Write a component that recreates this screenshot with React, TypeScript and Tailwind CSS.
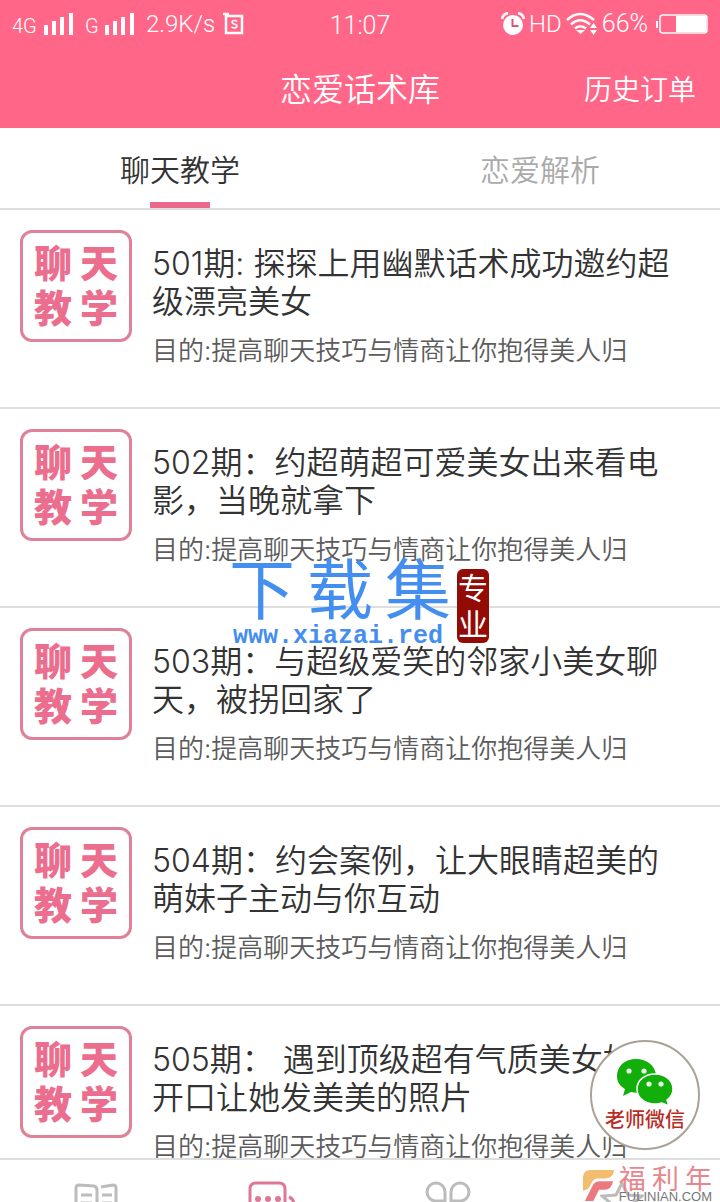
interface Lesson {
    id: number;
    title: string;
}

const lessons: Lesson[] = [
    { id: 501, title: '501期: 探探上用幽默话术成功邀约超级漂亮美女' },
    { id: 502, title: '502期：约超萌超可爱美女出来看电影，当晚就拿下' },
    { id: 503, title: '503期：与超级爱笑的邻家小美女聊天，被拐回家了' },
    { id: 504, title: '504期：约会案例，让大眼睛超美的萌妹子主动与你互动' },
    { id: 505, title: '505期： 遇到顶级超有气质美女如何开口让她发美美的照片' },
];

const goal = '目的:提高聊天技巧与情商让你抱得美人归';

function SignalBars() {
    return (
        <svg viewBox="0 0 29 23" className="h-[23px] w-[29px]" fill="currentColor" aria-hidden="true">
            <path d="M0 12h4v10H0zM8 8h4v14H8zM16 4h4v18h-4zM25 0h4v22h-4z" />
        </svg>
    );
}

function StatusBar() {
    return (
        <div className="relative flex h-12 items-center justify-between px-3 font-['Roboto','Noto_Sans_CJK_SC',sans-serif] text-2xl font-[350]">
            <div className="flex items-center">
                <span className="w-8 pt-1 text-xl">4G</span>
                <SignalBars />
                <span className="ml-3 w-5 pt-1 text-xl">G</span>
                <SignalBars />
                <span className="ml-3">2.9K/s</span>
                <svg viewBox="0 0 22 24" className="ml-2 h-6 w-[22px]" fill="none" stroke="currentColor" aria-hidden="true">
                    <path d="M3 4h16v17H3V2M0 2h6" strokeWidth="2.5" />
                    <path d="M14 9.5c-1-1.5-5-1.5-5 .8 0 2.4 5 1.2 5 3.7 0 2.3-4 2.5-5.5.8" strokeWidth="1.6" />
                </svg>
            </div>
            <span className="absolute left-1/2 -translate-x-1/2 pt-1 text-[25px]">11:07</span>
            <div className="flex items-center">
                <svg viewBox="0 0 24 24" className="h-6 w-6" aria-hidden="true">
                    <circle cx="12" cy="13" r="10" fill="currentColor" />
                    <path d="M1 7q1-5 6-6M23 7q-1-5-6-6" fill="none" stroke="currentColor" strokeWidth="2.5" />
                    <path d="M11.5 7v7h6" fill="none" stroke="#d9567a" strokeWidth="2" />
                </svg>
                <span className="ml-1">HD</span>
                <svg viewBox="0 0 32 24" className="ml-1 h-6 w-8" fill="none" stroke="currentColor" strokeWidth="2.5" aria-hidden="true">
                    <path d="M1 8Q14-4 28 8M5 12.5Q14 4 24 12.5M9 16.5Q14 12 20 16.5" />
                    <path d="M10 18h9l-4.5 4zM24 16l3.5-5 3.5 5zM24 18l3.5 5 3.5-5z" fill="currentColor" stroke="none" />
                </svg>
                <span className="ml-1 text-[25px]">66%</span>
                <svg viewBox="0 0 52 22" className="ml-2 h-[22px] w-[52px]" fill="none" aria-hidden="true">
                    <path d="M1 8v7" stroke="currentColor" strokeWidth="2" />
                    <rect x="4" y="2" width="47" height="18" rx="3" stroke="currentColor" strokeWidth="1.5" />
                    <path d="M20 3h29q1 0 1 1v14q0 1-1 1H20z" fill="currentColor" />
                </svg>
            </div>
        </div>
    );
}

function LessonBadge() {
    return (
        <div className="flex h-28 w-28 shrink-0 flex-col items-center justify-center rounded-xl border-3 border-[#df8298] text-[38px] leading-[45px] font-black text-[#ec6e8e]">
            <span className="flex gap-2">
                <span>聊</span>
                <span>天</span>
            </span>
            <span className="flex gap-2">
                <span>教</span>
                <span>学</span>
            </span>
        </div>
    );
}

function LessonRow({ lesson }: { lesson: Lesson }) {
    return (
        <li className="border-b-2 border-[#dedede]">
            <a href={`#lesson-${lesson.id}`} className="flex gap-5 px-5 pt-5 pb-9">
                <LessonBadge />
                <div className="min-w-0 flex-1 pt-[15px]">
                    <h2 className="mr-4 line-clamp-2 text-[32px] leading-[38px] font-[350] text-[#333]">{lesson.title}</h2>
                    <p className="mt-2.5 truncate pb-px text-[26px] leading-[39px] font-[350] text-[#5c5c5c]">{goal}</p>
                </div>
            </a>
        </li>
    );
}

function TeacherButton() {
    return (
        <button
            type="button"
            className="absolute right-5 bottom-[52px] flex h-[110px] w-[110px] flex-col items-center rounded-full border-2 border-[#aaa294] bg-white pt-4 text-xl leading-7 font-medium text-[#b92d25]"
        >
            <svg viewBox="0 0 58 48" className="h-12 w-[58px]" aria-hidden="true">
                <path d="M20 1C9 1 1 8 1 18c0 6 3 10 8 13l-2 7 8-4c13 3 25-4 25-16C40 8 31 1 20 1z" fill="#12ae0a" />
                <path d="M39 16c-10 0-18 6-18 15s8 15 18 15c3 0 5 0 7-1l7 3-2-6c4-3 6-6 6-11 0-9-8-15-18-15z" fill="#12ae0a" stroke="#fff" strokeWidth="1.5" />
                <g fill="#e6ffe4">
                    <circle cx="13" cy="13" r="2.6" />
                    <circle cx="28" cy="13" r="2.6" />
                    <circle cx="33" cy="26" r="2.6" />
                    <circle cx="45" cy="26" r="2.6" />
                </g>
            </svg>
            老师微信
        </button>
    );
}

function SiteMark() {
    return (
        <div className="pointer-events-none absolute top-[557px] left-[229px] text-[#438eee]">
            <div className="flex gap-3 text-[66px] leading-[66px]">
                <span>下</span>
                <span>载</span>
                <span>集</span>
            </div>
            <div className="ml-1 font-['Liberation_Mono',monospace] text-[25px] leading-7 font-bold">www.xiazai.red</div>
            <div className="absolute top-3 left-[228px] flex h-[74px] w-8 flex-col items-center justify-center rounded-md bg-[#920b05] text-[30px] leading-9 text-white">
                <span>专</span>
                <span>业</span>
            </div>
        </div>
    );
}

function PublisherMark() {
    return (
        <div className="pointer-events-none absolute right-2 bottom-0 flex items-end gap-1 text-[#e9858c]">
            <svg viewBox="0 0 34 34" className="h-[34px] w-8" aria-hidden="true">
                <path d="M0 23V9q0-8 8-8h25q-1 9-9 9h-8q-5 0-7 5-3 8-9 8z" fill="#f3bd70" />
                <path d="M2 34l8-16q2-5 8-5h14q-2 9-9 9h-6l-6 12z" fill="#ed7980" />
            </svg>
            <div>
                <div className="flex justify-between text-[27px] leading-6">
                    <span>福</span>
                    <span>利</span>
                    <span>年</span>
                </div>
                <div className="font-['Liberation_Sans',sans-serif] text-[13px] leading-2.5 text-[#777]">FULINIAN.COM</div>
            </div>
        </div>
    );
}

function BottomNav() {
    return (
        <nav className="grid h-11 shrink-0 grid-cols-4 overflow-hidden border-t-2 border-[#dedede] bg-white">
            <a href="#library" aria-label="Library" className="flex justify-center pt-5 text-[#bcbcbc]">
                <svg viewBox="0 0 44 40" className="ml-3 h-10 w-11" fill="none" stroke="currentColor" strokeWidth="3" aria-hidden="true">
                    <path d="M23 38l-21-2V8q0-3 3-3l15 1q3 1 3 4v28l19-2V8q0-3-3-3l-12 2" />
                    <path d="M7 15h11M28 15h10M7 23h11M28 23h10" />
                </svg>
            </a>
            <a href="#chat" aria-label="Chat" className="flex justify-center pt-5 text-[#df7895]">
                <svg viewBox="0 0 48 40" className="ml-1 h-10 w-12" fill="none" stroke="currentColor" strokeWidth="3" aria-hidden="true">
                    <path d="M2 34V9q0-6 6-6h23q6 0 6 6v22H10zM41 17q5 2 5 8v14" />
                    <g fill="currentColor" stroke="none">
                        <circle cx="10" cy="19" r="3" />
                        <circle cx="20" cy="19" r="3" />
                        <circle cx="30" cy="19" r="3" />
                    </g>
                </svg>
            </a>
            <a href="#discover" aria-label="Discover" className="flex justify-center pt-5 text-[#bcbcbc]">
                <svg viewBox="0 0 46 42" className="-ml-1 h-[42px] w-[46px]" fill="none" stroke="currentColor" strokeWidth="3" aria-hidden="true">
                    <path d="M20 21h-9a9 9 0 1 1 9-9zM26 21h9a9 9 0 1 0-9-9zM20 27h-9a9 9 0 1 0 9 9zM26 27h9a9 9 0 1 1-9 9z" />
                </svg>
            </a>
            <a href="#favorites" aria-label="Favorites" className="flex justify-center pt-5 text-[#bcbcbc]">
                <svg viewBox="0 0 44 40" className="-ml-4 h-10 w-11" fill="none" stroke="currentColor" strokeWidth="3" aria-hidden="true">
                    <path d="M22 3l6 12 14 1-11 9 4 14-13-8-13 8 4-14-11-9 14-1z" />
                </svg>
            </a>
        </nav>
    );
}

export default function App() {
    return (
        <div className="relative flex h-screen flex-col overflow-hidden bg-white font-['Inter','Noto_Sans_CJK_SC',sans-serif]">
            <header className="shrink-0 bg-[#ff6688] text-white">
                <StatusBar />
                <div className="relative flex h-20 items-center justify-center pt-1 font-[350]">
                    <h1 className="text-[32px]">恋爱话术库</h1>
                    <a href="#orders" className="absolute right-6 text-[28px]">
                        历史订单
                    </a>
                </div>
            </header>
            <div className="grid h-[82px] shrink-0 grid-cols-2 border-b-2 border-[#dedede] text-3xl font-[350]">
                <button type="button" className="relative pt-1 text-[#333]">
                    聊天教学
                    <span className="absolute bottom-0 left-1/2 h-1.5 w-[60px] -translate-x-1/2 bg-[#ea6a8d]" />
                </button>
                <button type="button" className="pt-1 text-[#aaa]">
                    恋爱解析
                </button>
            </div>
            <main className="min-h-0 flex-1 overflow-hidden">
                <ul>
                    {lessons.map((lesson) => (
                        <LessonRow key={lesson.id} lesson={lesson} />
                    ))}
                </ul>
            </main>
            <BottomNav />
            <TeacherButton />
            <SiteMark />
            <PublisherMark />
        </div>
    );
}
